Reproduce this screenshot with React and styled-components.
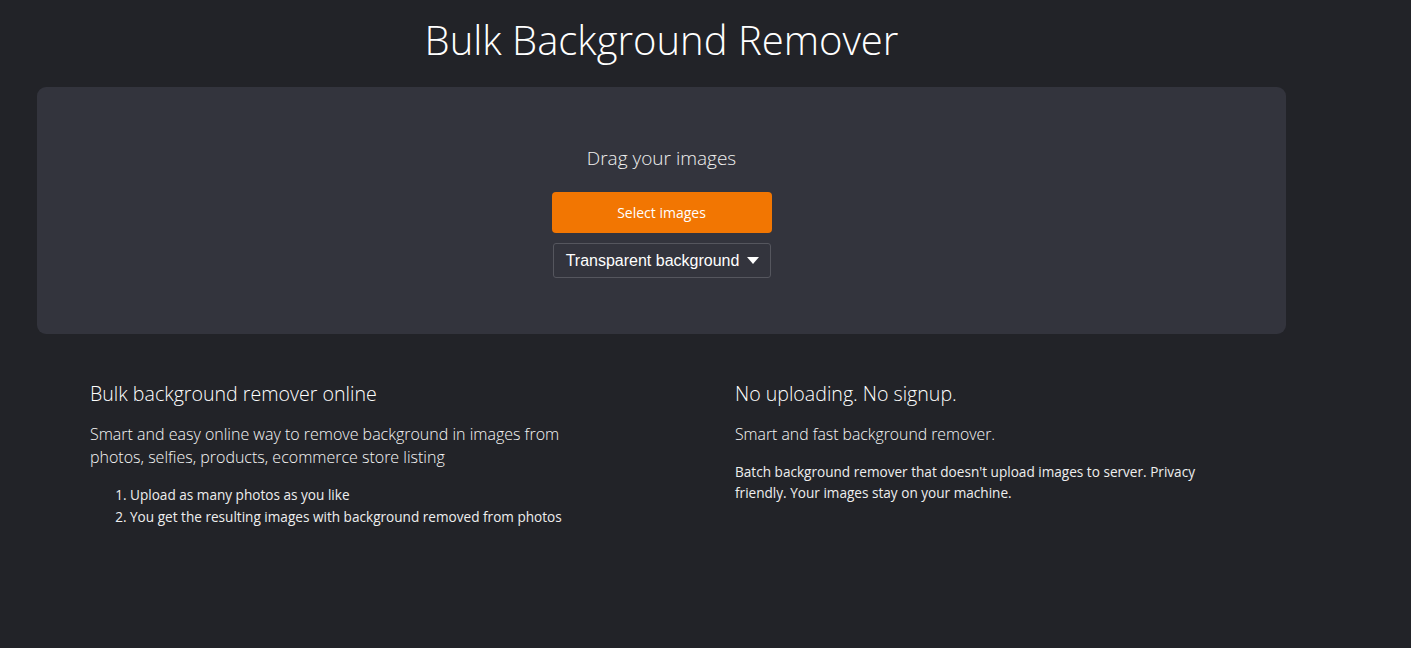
import React from "react";
import styled, { createGlobalStyle } from "styled-components";

const Global = createGlobalStyle`
  html, body { margin: 0; padding: 0; background: #222328; }
  body { font-family: "Open Sans", "Noto Sans", sans-serif; color: #ffffff; }
  * { box-sizing: border-box; }
`;

const Page = styled.div`
  width: 1249px;
  margin-left: 37px;
  min-height: 648px;
`;

const Title = styled.h1`
  margin: 0;
  padding-top: 14px;
  height: 87px;
  text-align: center;
  font-weight: 300;
  font-size: 40px;
  line-height: 52px;
  color: #ffffff;
`;

const DropPanel = styled.div`
  height: 247px;
  background: #33343d;
  border-radius: 9px;
  display: flex;
  flex-direction: column;
  align-items: center;
  padding-top: 58px;
`;

const DragText = styled.div`
  font-size: 19px;
  font-weight: 300;
  line-height: 26px;
  color: #f0f0f0;
  margin-bottom: 21px;
`;

const SelectButton = styled.button`
  width: 220px;
  height: 41px;
  border: none;
  border-radius: 4px;
  background: #f27602;
  color: #fff;
  font-family: "Open Sans", sans-serif;
  font-size: 14px;
  cursor: pointer;
`;

const Dropdown = styled.div`
  margin-top: 10px;
  width: 218px;
  height: 35px;
  border: 1px solid #55565e;
  border-radius: 3px;
  display: flex;
  align-items: center;
  justify-content: center;
  gap: 8px;
  padding-left: 2px;
  font-family: "Liberation Sans", Arial, sans-serif;
  font-size: 16px;
  color: #fff;
`;

const Caret = styled.span`
  width: 0;
  height: 0;
  border-left: 6px solid transparent;
  border-right: 6px solid transparent;
  border-top: 7px solid #fff;
`;

const InfoGrid = styled.div`
  display: grid;
  grid-template-columns: 645px 1fr;
  padding-left: 53px;
  padding-top: 45px;
`;

const Column = styled.section``;

const ColHeading = styled.h2`
  margin: 0 0 14px;
  font-size: 19.6px;
  font-weight: 300;
  line-height: 30px;
  color: #fff;
`;

const Lead = styled.p`
  margin: 0 0 15px;
  max-width: 480px;
  font-size: ${(p) => p.$size || 16}px;
  font-weight: 300;
  line-height: 23px;
  color: #f6f6f6;
`;

const Small = styled.p`
  margin: 0;
  max-width: 480px;
  font-size: 13.6px;
  line-height: 21px;
  color: #eeeeee;
`;

const Steps = styled.ol`
  margin: 0;
  padding-left: 40px;
  font-size: 13.6px;
  line-height: 22px;
  color: #eeeeee;
`;

export default function App() {
  return (
    <>
      <Global />
      <Page>
        <Title>Bulk Background Remover</Title>
        <DropPanel>
          <DragText>Drag your images</DragText>
          <SelectButton>Select images</SelectButton>
          <Dropdown>
            Transparent background <Caret />
          </Dropdown>
        </DropPanel>
        <InfoGrid>
          <Column>
            <ColHeading>Bulk background remover online</ColHeading>
            <Lead>
              Smart and easy online way to remove background in images from
              photos, selfies, products, ecommerce store listing
            </Lead>
            <Steps>
              <li>Upload as many photos as you like</li>
              <li>You get the resulting images with background removed from photos</li>
            </Steps>
          </Column>
          <Column>
            <ColHeading>No uploading. No signup.</ColHeading>
            <Lead $size={15.8}>Smart and fast background remover.</Lead>
            <Small>
              Batch background remover that doesn't upload images to server.
              Privacy friendly. Your images stay on your machine.
            </Small>
          </Column>
        </InfoGrid>
      </Page>
    </>
  );
}
